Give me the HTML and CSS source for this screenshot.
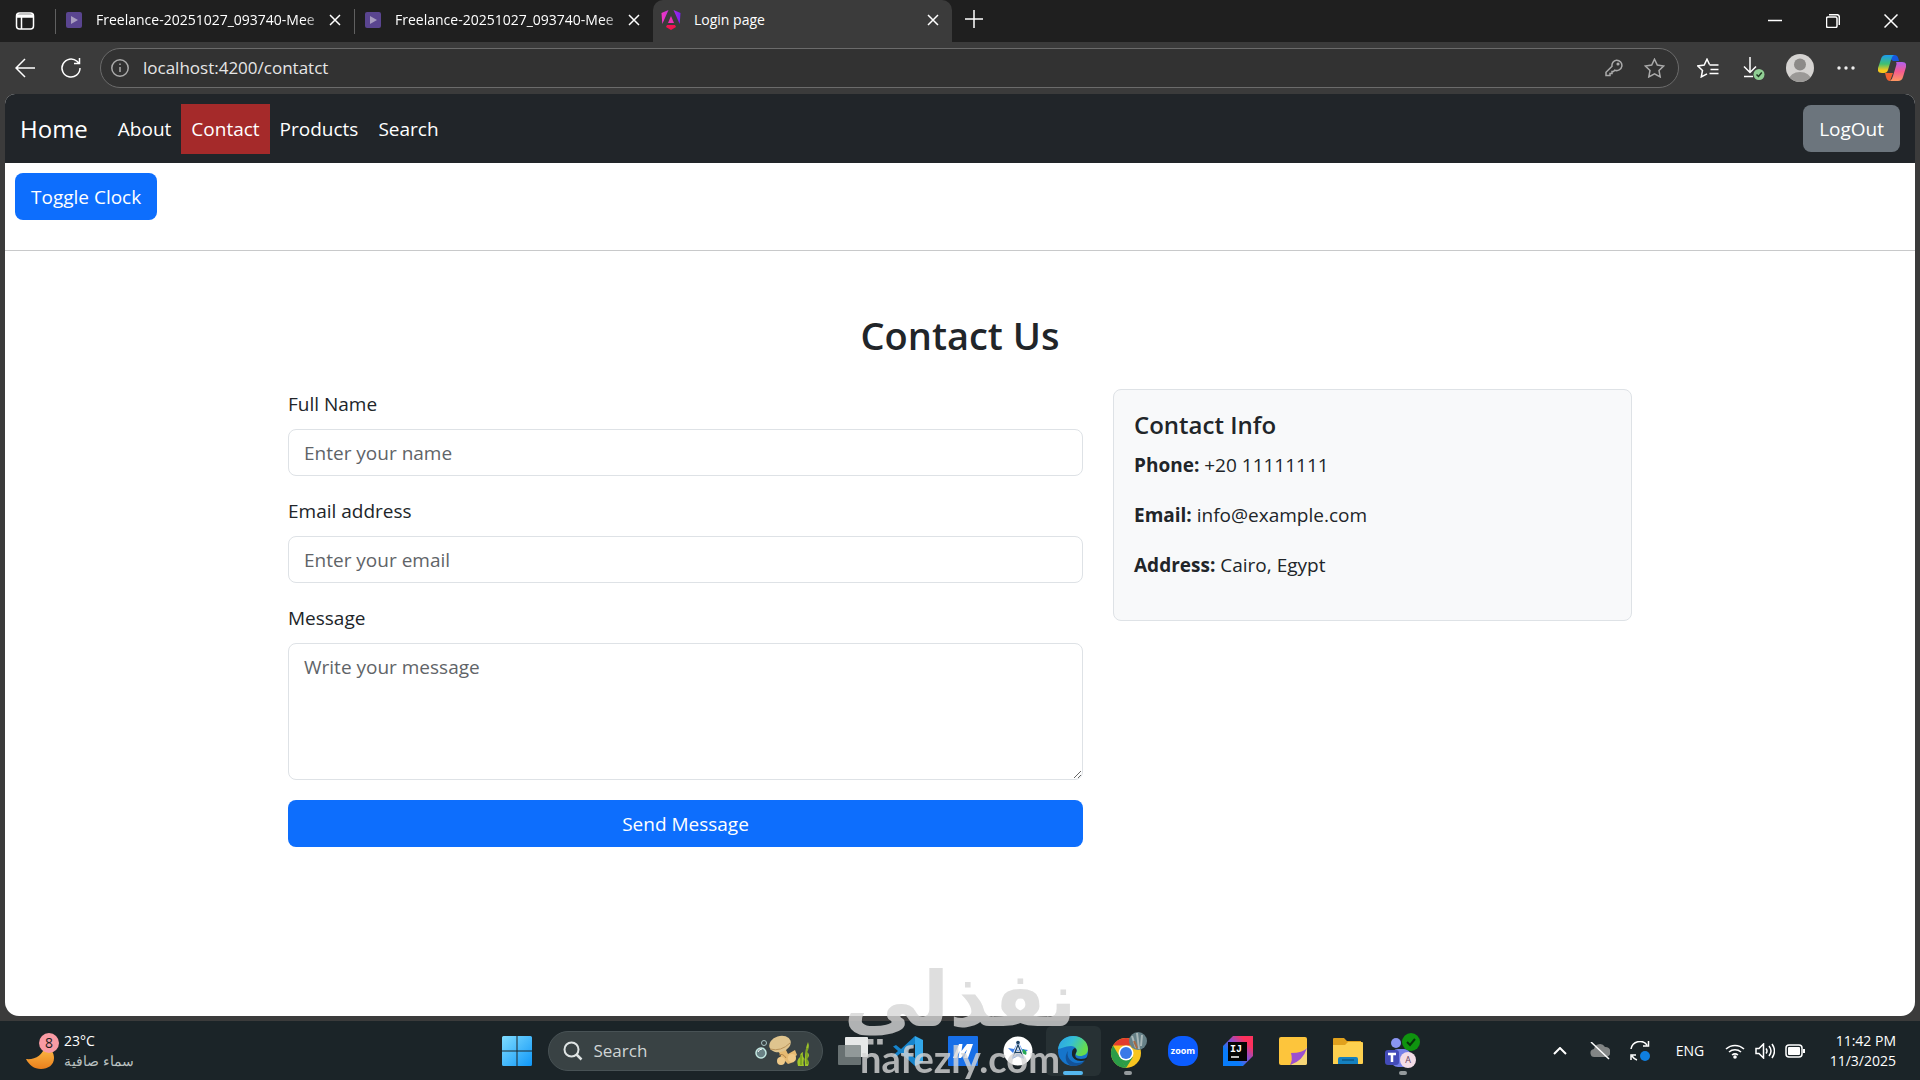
FILE: index.html
```html
<!DOCTYPE html>
<html lang="en">
<head>
  <meta charset="UTF-8" />
  <meta name="viewport" content="width=device-width, initial-scale=1" />
  <title>Login page</title>
  <link rel="stylesheet" href="styles.css">
</head>
<body>
  <header class="browser">
    <div class="tab-strip">
      <button class="tab-menu" aria-label="Tab actions">
        <svg width="20" height="20" viewBox="0 0 20 20" fill="none" stroke="#fff" stroke-width="1.5"><rect x="1.5" y="2" width="17" height="16" rx="3"/><path d="M2 4h16v2H2z" fill="#fff"/><path d="M6.500 6v12"/></svg>
      </button>
      <div class="tab">
        <svg class="favicon" viewBox="0 0 16 16"><rect width="16" height="16" rx="2" fill="#5a4590"/><path d="M5 4l7 4-7 4z" fill="#a89cc0"/></svg>
        <span class="tab-title faded">Freelance-20251027_093740-Mee</span>
        <button class="tab-close" aria-label="Close tab"><svg width="12" height="12" viewBox="0 0 12 12"><path d="M1 1l10 10M11 1L1 11"/></svg></button>
      </div>
      <div class="tab">
        <svg class="favicon" viewBox="0 0 16 16"><rect width="16" height="16" rx="2" fill="#5a4590"/><path d="M5 4l7 4-7 4z" fill="#a89cc0"/></svg>
        <span class="tab-title faded">Freelance-20251027_093740-Mee</span>
        <button class="tab-close" aria-label="Close tab"><svg width="12" height="12" viewBox="0 0 12 12"><path d="M1 1l10 10M11 1L1 11"/></svg></button>
      </div>
      <div class="tab active">
        <svg class="favicon angular" viewBox="0 0 20 20">
          <defs><linearGradient id="ng" x1="0" y1="0" x2="1" y2="0"><stop offset="0" stop-color="#f637c3"/><stop offset="1" stop-color="#7b1ff5"/></linearGradient></defs>
          <path d="M7.500 0L.5 3l.8 11zM12.500 0l7 3-.8 11z" fill="url(#ng)"/><path d="M10 6l3 7H7z" fill="#ee32b9"/><path d="M6 15h8l1 2-5 3-5-3z" fill="#f01452"/>
        </svg>
        <span class="tab-title">Login page</span>
        <button class="tab-close" aria-label="Close tab"><svg width="12" height="12" viewBox="0 0 12 12"><path d="M1 1l10 10M11 1L1 11"/></svg></button>
      </div>
      <button class="new-tab" aria-label="New tab"><svg width="18" height="18" viewBox="0 0 18 18"><path d="M9 0v18M0 9h18"/></svg></button>
      <div class="window-controls">
        <button aria-label="Minimize"><svg width="14" height="14" viewBox="0 0 14 14"><path d="M0 6.500h14"/></svg></button>
        <button aria-label="Restore"><svg width="14" height="14" viewBox="0 0 14 14"><rect x=".5" y="3" width="10.500" height="10.500" rx="1.500"/><path d="M3 .7h8a2.300 2.300 0 0 1 2.300 2.300v8"/></svg></button>
        <button aria-label="Close"><svg width="14" height="14" viewBox="0 0 14 14"><path d="M.5.500l13 13M13.500.500l-13 13"/></svg></button>
      </div>
    </div>

    <div class="toolbar">
      <button aria-label="Back"><svg width="20" height="20" viewBox="0 0 20 20"><path d="M20 10H1M10 1l-9 9 9 9"/></svg></button>
      <button aria-label="Refresh"><svg width="22" height="22" viewBox="0 0 22 22"><path d="M20 11a9 9 0 1 1-3-6.700l2 2M19.500 1v5.500H14"/></svg></button>
      <div class="address">
        <svg width="18" height="18" viewBox="0 0 18 18" class="dim"><circle cx="9" cy="9" r="8.200"/><path d="M9 8v5M9 4.500v1.500"/></svg>
        <input type="text" value="localhost:4200/contatct" aria-label="Address bar" />
        <button aria-label="Passwords"><svg width="18" height="18" viewBox="0 0 18 18" class="dim"><path d="M11.500 1.200a5.200 5.200 0 1 1-1.800 10L8.500 12.500H7v2H5v2H1v-3.300l6-6a5.200 5.200 0 0 1 4.500-6z"/><circle cx="13" cy="5" r=".8"/></svg></button>
        <button aria-label="Add to favorites"><svg width="21" height="20" viewBox="0 0 21 20" class="dim"><path d="M10.500 1.200l2.800 5.900 6.300.9-4.600 4.500 1.200 6.400-5.700-3.100-5.700 3.100 1.200-6.400L1.400 8l6.300-.9z"/></svg></button>
      </div>
      <button aria-label="Favorites"><svg width="22" height="20" viewBox="0 0 22 20"><path d="M12.500 6.500L10 1.200 7.200 7.100.9 8l4.600 4.500-1.200 6.400L10 15.800M12.500 7h9M13.500 11.500h8M12.500 15.500h9"/></svg></button>
      <button aria-label="Downloads"><svg width="22" height="24" viewBox="0 0 22 24"><path d="M7 1v15M1 10.500l6 6 6-6M1 20.500h9"/><circle cx="16" cy="18.500" r="5.500" fill="#90cf94" stroke="none"/><path d="M13.500 18.500l2 2 3.300-4" stroke="#203822"/></svg></button>
      <button aria-label="Profile"><svg width="28" height="28" viewBox="0 0 28 28"><defs><clipPath id="pc"><circle cx="14" cy="14" r="14"/></clipPath></defs><g clip-path="url(#pc)" stroke="none"><path d="M0 0h28v28H0z" fill="#d5d3d1"/><circle cx="14" cy="10.500" r="6" fill="#8c8a88"/><ellipse cx="14" cy="26" rx="11" ry="8" fill="#9b9997"/></g></svg></button>
      <button aria-label="Settings and more"><svg width="18" height="4" viewBox="0 0 18 4"><g fill="#eee" stroke="none"><circle cx="2" cy="2" r="1.700"/><circle cx="9" cy="2" r="1.700"/><circle cx="16" cy="2" r="1.700"/></g></svg></button>
      <button aria-label="Copilot">
        <svg width="28" height="28" viewBox="0 0 28 28">
          <defs>
            <linearGradient id="cp1" x1="0" y1="0" x2="0" y2="1"><stop offset="0" stop-color="#1c9cf0"/><stop offset=".5" stop-color="#40c070"/><stop offset=".85" stop-color="#f8c81c"/></linearGradient>
            <linearGradient id="cp2" x1="0" y1="0" x2="0" y2="1"><stop offset="0" stop-color="#b060f0"/><stop offset=".5" stop-color="#f45a90"/><stop offset="1" stop-color="#ff9860"/></linearGradient>
          </defs>
          <g stroke="none">
            <path d="M8 1h9q3 0 4 6h-6z" fill="#1558e0"/>
            <path d="M7 19h8l-3 8q-3 0-4-4z" fill="#f06030"/>
            <path d="M8 1h8q-2 1-3 5l-3 10q-1 3-4 3H4q-5 0-4-5L3 5q1-4 5-4z" fill="url(#cp1)"/>
            <path d="M18 8h6q5 0 4 5l-3 10q-1 4-5 4h-8q2-1 3-5l3-10q1-3 0-4z" fill="url(#cp2)"/>
          </g>
        </svg>
      </button>
    </div>
  </header>

  <main class="page">
    <nav class="navbar">
      <a class="brand" href="#">Home</a>
      <ul class="nav-links">
        <li><a href="#">About</a></li>
        <li><a href="#" class="current">Contact</a></li>
        <li><a href="#">Products</a></li>
        <li><a href="#">Search</a></li>
      </ul>
      <button class="btn btn-secondary">LogOut</button>
    </nav>

    <section class="clock">
      <button class="btn btn-primary">Toggle Clock</button>
    </section>

    <section class="contact">
      <h2>Contact Us</h2>
      <div class="row">
        <form class="contact-form">
          <label for="name">Full Name</label>
          <input type="text" id="name" placeholder="Enter your name" />
          <label for="email">Email address</label>
          <input type="email" id="email" placeholder="Enter your email" />
          <label for="message">Message</label>
          <textarea id="message" placeholder="Write your message"></textarea>
          <button type="submit" class="btn btn-primary">Send Message</button>
        </form>
        <aside class="card">
          <h5>Contact Info</h5>
          <p><strong>Phone:</strong> +20 11111111</p>
          <p><strong>Email:</strong> info@example.com</p>
          <p><strong>Address:</strong> Cairo, Egypt</p>
        </aside>
      </div>
    </section>
  </main>

  <footer class="taskbar">
    <button class="weather">
      <svg width="34" height="38" viewBox="0 0 34 38"><defs><linearGradient id="moon" x1="0" y1="0" x2="0" y2="1"><stop offset="0" stop-color="#ffc04a"/><stop offset="1" stop-color="#ea7f1c"/></linearGradient></defs><path d="M0 27c9 1 17-4 19-13 6 2 9 7 9 12 0 7-6 11-13 11C8 37 3 33 0 27z" fill="url(#moon)"/><circle cx="23" cy="11" r="10" fill="#f99ba4"/><text x="23" y="16" text-anchor="middle" font-size="14" fill="#1c1c1c">8</text></svg>
      <span class="weather-text">
        <span>23°C</span>
        <span class="muted" lang="ar" dir="rtl">سماء صافية</span>
      </span>
    </button>

    <div class="apps">
      <button class="app" aria-label="Start"><svg width="30" height="30" viewBox="0 0 30 30"><defs><linearGradient id="win" x1="0" y1="0" x2="1" y2="1"><stop offset="0" stop-color="#7fdcff"/><stop offset="1" stop-color="#0f97f8"/></linearGradient></defs><path d="M1.500 0H14.500v14.500H0V1.500Q0 0 1.500 0zM15.500 0h13Q30 0 30 1.500v13H15.500zM0 15.500h14.500V30h-13Q0 30 0 28.500zM15.500 15.500H30v13q0 1.500-1.500 1.500h-13z" fill="url(#win)"/></svg></button>
      <div class="search">
        <svg width="20" height="20" viewBox="0 0 20 20" fill="none" stroke="#dfe4e4" stroke-width="2"><circle cx="8.500" cy="8.500" r="7"/><path d="M13.500 13.500l5 5" stroke-width="2.500"/></svg>
        <input type="search" placeholder="Search" aria-label="Search" />
        <svg width="56" height="32" viewBox="0 0 56 32">
          <circle cx="9" cy="8" r="2.500" fill="none" stroke="#a8c4c4"/><circle cx="6" cy="18" r="5" fill="#6a8286" stroke="#c3e8e2" stroke-width="1.500"/><path d="M3 17q1-3 4-3" stroke="#fff" fill="none"/>
          <path d="M22 14l8-1 3 6 7-4 2 5-4 3 1 4-6 2-3-3-4 2-3-4 3-3z" fill="#e6ba72"/><path d="M24 20q4-2 7 3" stroke="#b58548" fill="none"/>
          <circle cx="26" cy="26" r="4" fill="#efc988"/><circle cx="37" cy="23" r="4" fill="#efc988"/>
          <ellipse cx="25" cy="9" rx="11" ry="8" transform="rotate(-18 25 9)" fill="#dfc48e"/><path d="M15 14q11 3 20-6" stroke="#b9935a" fill="none"/>
          <path d="M43 31q-2-6 2-9 0-4 3-5-1 5 2 7 0-10 3-17 2 5-1 10 4 3 0 7 3 3 1 7h-3q0-6-1-8-1 5 0 8z" fill="#9ec52a"/><path d="M46 30v-10M52 29V13" stroke="#5e8618"/>
        </svg>
      </div>
      <button class="app" aria-label="Task view"><svg width="30" height="28" viewBox="0 0 30 28"><rect x="7" width="23" height="20" rx="1" fill="#e6e8e8"/><rect y="8" width="23" height="20" rx="1" fill="#7c8484" opacity=".8"/></svg></button>
      <button class="app" aria-label="Visual Studio Code"><svg width="30" height="30" viewBox="0 0 30 30"><path d="M22 0L8 13 3 9 0 10.500 5 15 0 19.500 3 21l5-4 14 13V22l-9-7 9-7z" fill="#1684cc"/><path d="M22 0l8 4v22l-8 4z" fill="#32a7ea"/></svg></button>
      <button class="app" aria-label="Mobalytics"><svg width="30" height="30" viewBox="0 0 30 30"><rect width="30" height="30" rx="1" fill="#176fe8"/><path d="M5 22L11 8h3.500l-1 7 5.500-7h6l-5 14h-4l3-8.500L13 22h-2.500l1-7L8.500 22z" fill="#fff"/></svg></button>
      <button class="app" aria-label="Android Studio"><svg width="30" height="30" viewBox="0 0 30 30"><circle cx="15" cy="15" r="14.500" fill="#fff"/><path d="M5 12l6 1 3-6h2l3 6 6 1-5 4 1 5-6-3-6 3 1-6z" fill="#3b7ee8"/><path d="M20 13q5 2 3 6l-4-2z" fill="#29a955"/><path d="M10.500 20l4.500-11 4.500 11M12 16.500h6" stroke="#fff" stroke-width="3" fill="none"/><path d="M10.500 20l4.500-11 4.500 11M12 16.500h6" stroke="#1d4264" stroke-width="1.300" fill="none"/><circle cx="15" cy="6.500" r="1.800" fill="#1d4264"/></svg></button>
      <button class="app focused" aria-label="Edge">
        <svg width="30" height="30" viewBox="0 0 30 30"><defs><linearGradient id="edge" x1="0" y1="0" x2="1" y2=".4"><stop offset="0" stop-color="#2a9fe8"/><stop offset=".5" stop-color="#35bfd4"/><stop offset="1" stop-color="#66dd4c"/></linearGradient></defs><circle cx="15" cy="15" r="15" fill="#1675cb"/><path d="M0 13C1 5 7 0 15 0c9 0 15 6 15 13 0 5-4 7-8 7-3 0-5-1-4-3 2-3 0-7-5-7-6 0-10 3-13 3z" fill="url(#edge)"/><path d="M10 15c-2 6 3 12 9 12 4 0 7-1 9-4-3 5-7 7-12 7C9 30 5 22 10 15z" fill="#135297"/><path d="M18 17c-2 3 0 6 5 6 3 0 5-1 7-2l-2 3c-7 3-15-1-14-7 0-3 1-4 3-5 2 1 2 3 1 5z" fill="#1b2529"/></svg>
      </button>
      <button class="app running" aria-label="Chrome">
        <svg width="38" height="38" viewBox="0 0 38 38"><circle cx="17" cy="21" r="15" fill="#f8c520"/><path d="M4 13.500A15 15 0 0 1 30 13.500H17z" fill="#e33b2e"/><path d="M4 13.500L12 27l5 9A15 15 0 0 1 4 13.500z" fill="#2b9c48"/><path d="M17 36l7-11-6 3-8-3z" fill="#2b9c48"/><circle cx="17" cy="21" r="7.500" fill="#fff"/><circle cx="17" cy="21" r="6" fill="#3879e8"/><circle cx="29" cy="9" r="9" fill="#668087"/><path d="M23 4l4 12M28 1l2 16M33 3l-1 11" stroke="#a9b7b8" stroke-width="2"/><path d="M25 9l3 7" stroke="#a76a45" stroke-width="2"/></svg>
      </button>
      <button class="app" aria-label="Zoom"><svg width="30" height="30" viewBox="0 0 30 30"><rect width="30" height="30" rx="13" fill="#0b5cff"/><text x="15" y="18" text-anchor="middle" font-size="9" font-weight="700" fill="#fff">zoom</text></svg></button>
      <button class="app" aria-label="IntelliJ IDEA"><svg width="30" height="30" viewBox="0 0 30 30"><defs><linearGradient id="ij" x1="0" y1="1" x2="1" y2="0"><stop offset=".3" stop-color="#087cfa"/><stop offset=".55" stop-color="#8b4fd0"/><stop offset=".8" stop-color="#fe315d"/></linearGradient></defs><path d="M10 0h20v20L20 30H0V10z" fill="url(#ij)"/><rect x="5" y="6" width="19" height="19" fill="#050505"/><text x="7" y="16" font-size="10" font-weight="700" fill="#fff" class="mono">IJ</text><path d="M8 21h8" stroke="#fff" stroke-width="1.500"/></svg></button>
      <button class="app" aria-label="Sticky Notes"><svg width="28" height="28" viewBox="0 0 28 28"><path d="M2 0h24q2 0 2 2v24q0 2-2 2H2q-2 0-2-2V2q0-2 2-2z" fill="#fdc53c"/><path d="M28 10v16q0 2-2 2H12z" fill="#f6d577"/><path d="M28 11q-4 5-16 5 2 7-1 12 13-4 17-17z" fill="#9b4fd0"/></svg></button>
      <button class="app" aria-label="File Explorer"><svg width="30" height="28" viewBox="0 0 30 28"><path d="M0 2q0-1 1-1h10l3 3h14v8H0z" fill="#e1a11d"/><path d="M0 8h12l3-3h14q1 0 1 1v20q0 1-1 1H0z" fill="#fdd04f"/><path d="M5 27v-5q0-2 2-2h16q2 0 2 2v5z" fill="#1581c0"/><path d="M9 23h12" stroke="#0d5a88" stroke-width="1.500"/></svg></button>
      <button class="app running" aria-label="Teams"><svg width="36" height="36" viewBox="0 0 36 36"><circle cx="11" cy="10" r="5" fill="#8a95f2"/><rect x="6" y="16" width="20" height="18" rx="7" fill="#7580e8"/><rect y="17" width="14" height="15" rx="3" fill="#434bb8"/><path d="M3 21h8M7 21v8" stroke="#fff" stroke-width="2.500"/><circle cx="26" cy="9" r="9" fill="#0f930f"/><path d="M22 9l3 3 5-6" stroke="#06330a" stroke-width="2" fill="none"/><circle cx="23" cy="27" r="8" fill="#f3dce6"/><text x="23" y="30" text-anchor="middle" font-size="9" fill="#6a4056">A</text></svg></button>
    </div>

    <div class="tray">
      <button aria-label="Hidden icons"><svg width="14" height="8" viewBox="0 0 14 8"><path d="M1 7l6-6 6 6"/></svg></button>
      <button aria-label="OneDrive"><svg width="20" height="18" viewBox="0 0 20 18"><path d="M5 15a4 4 0 0 1-1-8 6 6 0 0 1 11-2 5 5 0 0 1 1 10z" fill="#828585" stroke="none"/><path d="M1 0l18 17" stroke-width="1.500"/></svg></button>
      <button aria-label="Update"><svg width="20" height="20" viewBox="0 0 20 20"><path d="M1 8a9 9 0 0 1 16-4M18.500 0v5H13M7 19q-3-1-5-4M1 19v-5h5" stroke-width="1.500"/><circle cx="15" cy="15" r="5" fill="#0f7fe0" stroke="none"/></svg></button>
      <button class="language">ENG</button>
      <button class="status" aria-label="Network, volume and battery">
        <svg width="20" height="16" viewBox="0 0 20 16"><path d="M1 6a13 13 0 0 1 18 0M4 9a9 9 0 0 1 12 0M7 12a5 5 0 0 1 6 0" stroke-width="1.500"/><circle cx="10" cy="14" r="1.800" fill="#fff" stroke="none"/></svg>
        <svg width="20" height="16" viewBox="0 0 20 16"><path d="M1 5.500h3L8.500 1v14L4 10.500H1zM11 5.500q2 2.500 0 5M14 3q4 5 0 10M17 1q5 7 0 14" stroke-width="1.500"/></svg>
        <svg width="20" height="14" viewBox="0 0 20 14"><rect x="1" y="1" width="16" height="12" rx="3" stroke-width="1.500"/><rect x="3" y="3" width="12" height="8" rx="1" fill="#fff" stroke="none"/><path d="M19 5v4" stroke-width="2"/></svg>
      </button>
      <button class="time"><span>11:42 PM</span><span>11/3/2025</span></button>
    </div>
  </footer>

  <div class="watermark">
    <span class="watermark-ar" lang="ar" dir="rtl">نفذلي</span>
    <span class="watermark-en">nafezly.com</span>
  </div>
</body>
</html>
```
FILE: styles.css
```css
* {
  box-sizing: border-box;
}

body {
  margin: 0;
  min-height: 100vh;
  display: flex;
  flex-direction: column;
  background: #3b3b3b;
  color: #212529;
  font-family: 'Segoe UI', 'Open Sans', 'Noto Sans', sans-serif;
  font-size: 19px;
  line-height: 30px;
}

button, input, textarea {
  font: inherit;
}

button {
  cursor: pointer;
}

svg {
  flex: none;
  display: block;
}

/* browser frame */
.tab-strip {
  display: flex;
  height: 42px;
  background: #1f1f1f;
  color: #fff;
  font-size: 14px;
}

.browser button, .taskbar button {
  display: flex;
  align-items: center;
  justify-content: center;
  padding: 0;
  border: none;
  background: none;
  color: #fff;
}

.browser button svg, .address svg, .tray svg {
  fill: none;
  stroke: #fff;
  stroke-width: 1.5px;
}

.tray svg {
  stroke-width: 2px;
}

.browser svg.dim, .browser button svg.dim {
  stroke: #aaa;
}

.browser .tab-menu {
  width: 50px;
}

.tab {
  position: relative;
  display: flex;
  align-items: center;
  width: 299px;
  padding: 0 6px 2px 16px;
}

.tab:not(.active)::before {
  content: '';
  position: absolute;
  left: 5px;
  top: 9px;
  height: 25px;
  border-left: 1px solid #606060;
}

.tab.active {
  margin-left: 5px;
  padding: 0 11px 2px 8px;
  background: #3b3b3b;
  border-radius: 10px 10px 0 0;
}

.favicon {
  width: 16px;
  height: 16px;
  margin-right: 14px;
}

.favicon.angular {
  width: 20px;
  height: 20px;
  margin-right: 13px;
}

.tab-title {
  flex: 1;
  overflow: hidden;
  white-space: nowrap;
}

.tab-title.faded {
  -webkit-mask-image: linear-gradient(to right, #000 90%, transparent);
  mask-image: linear-gradient(to right, #000 90%, transparent);
}

.browser .tab-close {
  width: 16px;
}

.browser .new-tab {
  width: 44px;
  padding-bottom: 4px;
}

.window-controls {
  display: flex;
  margin-left: auto;
}

.window-controls button {
  width: 58px;
}

.toolbar {
  display: flex;
  align-items: center;
  height: 52px;
  padding: 0 5px 0 2px;
}

.toolbar > button {
  width: 46px;
}

.address {
  flex: 1;
  display: flex;
  align-items: center;
  gap: 14px;
  height: 40px;
  margin: 0 6px;
  padding: 0 11px 0 10px;
  border: 1px solid #6b6b6b;
  border-radius: 20px;
  background: #323232;
}

.address input {
  flex: 1;
  padding: 0;
  border: none;
  background: none;
  color: #e6e6e6;
  font-size: 17px;
}

.address button {
  width: 26px;
}

/* page */
.page {
  flex: 1;
  margin: 0 5px 5px;
  border-radius: 10px 10px 14px 14px;
  overflow: hidden;
  background: #fff;
}

.navbar {
  display: flex;
  align-items: center;
  height: 69px;
  padding: 0 15px;
  background: #212529;
}

.navbar a {
  color: #fff;
  text-decoration: none;
}

.brand {
  margin-right: 20px;
  font-size: 24px;
}

.nav-links {
  display: flex;
  flex: 1;
  margin: 0;
  padding: 0;
  list-style: none;
}

.nav-links a {
  display: block;
  padding: 10px;
}

.nav-links .current {
  background: #a52a2a;
}

.btn {
  height: 47px;
  padding: 0 16px;
  border: none;
  border-radius: 8px;
  color: #fff;
}

.btn-primary {
  background: #0d6efd;
}

.btn-secondary {
  background: #6c757d;
}

.clock {
  padding: 10px 10px 30px;
  border-bottom: 1px solid #c8c9ca;
}

.contact {
  max-width: 1404px;
  margin: 0 auto;
  padding: 60px 30px;
}

h2 {
  margin: 0 0 30px;
  font-size: 38px;
  font-weight: 600;
  line-height: 48px;
  text-align: center;
}

.row {
  display: grid;
  grid-template-columns: 795fr 519fr;
  gap: 30px;
  align-items: start;
}

.contact-form {
  display: flex;
  flex-direction: column;
}

.contact-form label {
  margin-bottom: 10px;
}

.contact-form input, .contact-form textarea {
  height: 47px;
  margin-bottom: 20px;
  padding: 8px 15px;
  border: 1px solid #dee2e6;
  border-radius: 8px;
  background: #fff;
  color: #212529;
}

.contact-form textarea {
  height: 137px;
  resize: vertical;
}

.contact-form ::placeholder {
  color: #5f6468;
}

.card {
  padding: 20px;
  border: 1px solid #dee2e6;
  border-radius: 8px;
  background: #f8f9fa;
}

.card h5 {
  margin: 0 0 10px;
  font-size: 24px;
  font-weight: 600;
  line-height: 30px;
}

.card p {
  margin: 0 0 20px;
}

/* taskbar */
.taskbar {
  display: grid;
  grid-template-columns: 1fr auto 1fr;
  align-items: center;
  height: 59px;
  padding: 0 24px;
  background: #1b2428;
  color: #fff;
  font-size: 14px;
  line-height: 20px;
}

.taskbar .weather {
  justify-self: start;
  gap: 4px;
  padding-left: 2px;
}

.weather-text {
  display: flex;
  flex-direction: column;
  align-items: flex-start;
}

.muted {
  color: #b9c0c0;
}

.apps {
  display: flex;
  align-items: center;
}

.taskbar .app {
  position: relative;
  width: 55px;
  height: 50px;
}

.taskbar .focused {
  background: #273134;
  border-radius: 6px;
}

.app.focused::after, .app.running::after {
  content: '';
  position: absolute;
  bottom: 1px;
  left: 50%;
  width: 8px;
  height: 4px;
  margin-left: -4px;
  border-radius: 2px;
  background: #949a9c;
}

.app.focused::after {
  width: 20px;
  margin-left: -10px;
  background: #55b7ee;
}

.search {
  display: flex;
  align-items: center;
  gap: 11px;
  width: 275px;
  height: 40px;
  margin: 0 3px;
  padding: 0 11px 0 14px;
  border: 1px solid #485255;
  border-radius: 20px;
  background: #394244;
}

.search input {
  flex: 1;
  min-width: 0;
  padding: 0;
  border: none;
  background: none;
  color: #fff;
  font-size: 17px;
}

.search input::placeholder {
  color: #d0d5d5;
}

.mono {
  font-family: 'Liberation Mono', monospace;
}

.tray {
  display: flex;
  align-items: center;
  justify-content: flex-end;
}

.tray > button {
  width: 40px;
}

.tray .language {
  width: 60px;
}

.tray .status {
  width: 90px;
  gap: 10px;
}

.tray .time {
  flex-direction: column;
  align-items: flex-end;
  width: 86px;
}

/* site mark over the page */
.watermark {
  position: fixed;
  bottom: 0;
  left: 50%;
  transform: translateX(-50%);
  display: flex;
  flex-direction: column;
  align-items: center;
  color: #d6d6d6;
  opacity: 0.8;
  pointer-events: none;
}

.watermark-ar {
  font-family: 'DejaVu Sans', sans-serif;
  font-size: 76px;
  font-weight: 700;
  line-height: 72px;
}

.watermark-en {
  font-family: Lato, sans-serif;
  font-size: 38px;
  font-weight: 700;
  line-height: 44px;
}
```
